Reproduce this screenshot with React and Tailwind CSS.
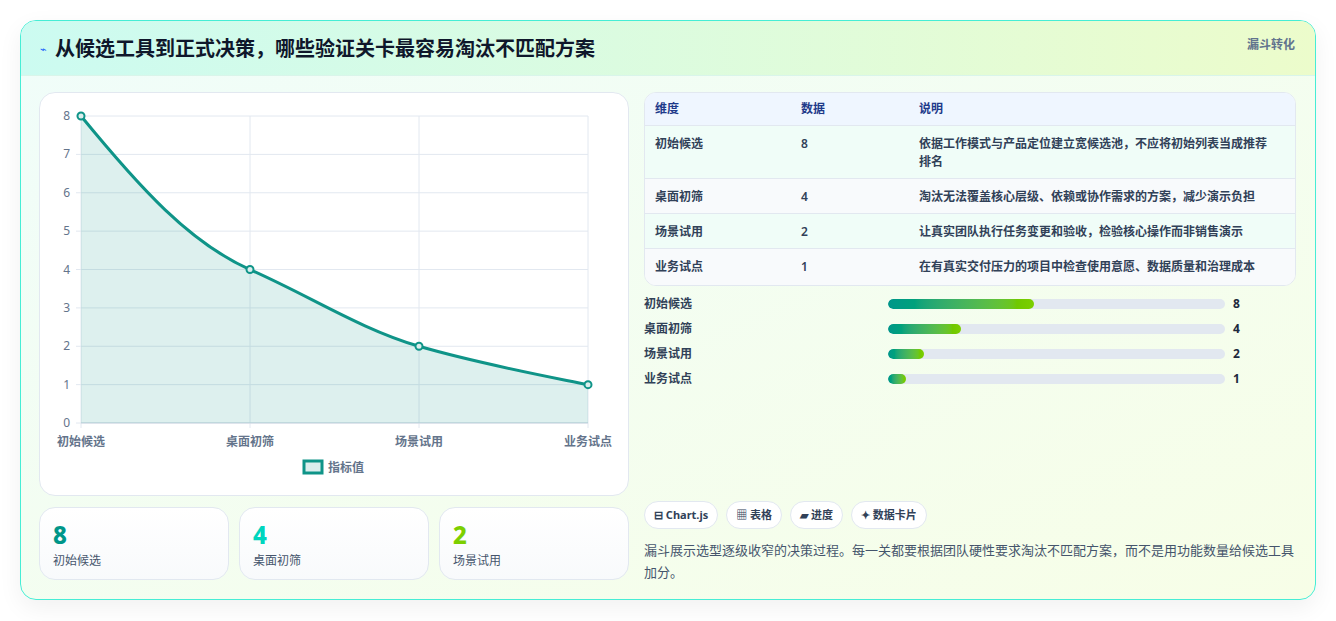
const font = { fontFamily: '"Noto Sans", "Noto Sans CJK SC", sans-serif' };

const rows = [
  { name: '初始候选', v: 8, desc: '依据工作模式与产品定位建立宽候选池，不应将初始列表当成推荐排名', h: 'h-[53px]' },
  { name: '桌面初筛', v: 4, desc: '淘汰无法覆盖核心层级、依赖或协作需求的方案，减少演示负担', h: 'h-[35px]' },
  { name: '场景试用', v: 2, desc: '让真实团队执行任务变更和验收，检验核心操作而非销售演示', h: 'h-[35px]' },
  { name: '业务试点', v: 1, desc: '在有真实交付压力的项目中检查使用意愿、数据质量和治理成本', h: 'h-[36px]' },
];

function Chart() {
  const ys = [0, 1, 2, 3, 4, 5, 6, 7, 8];
  const xs = [41, 210, 379, 548];
  const yOf = (v) => 330 - v * 38.375;
  const line = 'M41,23 C100,95 150,150 210,176.6 C270,203 320,236 379,253.3 C440,271 500,282 548,291.7';
  return (
    <svg width="589" height="404" className="block">
      {ys.map((v) => (
        <g key={v}>
          <line x1="36" x2="548" y1={yOf(v)} y2={yOf(v)} stroke="#e2e8f0" />
          <text x="30" y={yOf(v) + 4} textAnchor="end" fontSize="12" fill="#64748b">{v}</text>
        </g>
      ))}
      {xs.map((x) => (
        <line key={x} x1={x} x2={x} y1="23" y2="335" stroke="#e2e8f0" />
      ))}
      <line x1="41" x2="548" y1="330" y2="330" stroke="#cbd5e1" />
      <path d={line + ' L548,330 L41,330 Z'} fill="#0f9488" fillOpacity="0.14" />
      <path d={line} fill="none" stroke="#0f9488" strokeWidth="3" />
      {[8, 4, 2, 1].map((v, i) => (
        <circle key={i} cx={xs[i]} cy={yOf(v)} r="3.5" fill="#dbeeed" stroke="#0f9488" strokeWidth="2" />
      ))}
      {['初始候选', '桌面初筛', '场景试用', '业务试点'].map((t, i) => (
        <text key={t} x={xs[i]} y="353" textAnchor="middle" fontSize="12" fontWeight="600" fill="#64748b">{t}</text>
      ))}
      <rect x="264" y="368" width="18" height="12" fill="#dbeeed" stroke="#0f9488" strokeWidth="3" />
      <text x="288" y="379" fontSize="12" fontWeight="600" fill="#64748b">指标值</text>
    </svg>
  );
}

export default function App() {
  return (
    <div style={font} className="w-[1336px] h-[621px] bg-white pt-5 px-5">
      <div className="w-[1296px] h-[580px] rounded-2xl border border-teal-300 overflow-hidden bg-gradient-to-br from-[#f0fdfa] to-[#f7fee7] shadow-[0_8px_24px_rgba(0,0,0,0.06)] flex flex-col">
        <div className="h-[55px] shrink-0 flex items-start justify-between pl-[19px] pr-5 pt-[14px] bg-gradient-to-r from-[#ccfbf1] to-[#ecfccb] border-b border-[#d9f5ea]">
          <div className="flex items-center gap-2">
            <span className="text-blue-600 text-[11px]">⌁</span>
            <span className="text-[20px] font-bold text-slate-900 leading-7">从候选工具到正式决策，哪些验证关卡最容易淘汰不匹配方案</span>
          </div>
          <span className="text-xs font-bold text-slate-500 mt-[2px]">漏斗转化</span>
        </div>
        <div className="flex gap-[15px] pl-[18px] pt-4">
          <div className="w-[590px] flex flex-col gap-[11px]">
            <div className="h-[404px] rounded-2xl bg-white border border-slate-200">
              <Chart />
            </div>
            <div className="flex gap-[10px]">
              {[
                ['8', '初始候选', 'text-teal-600'],
                ['4', '桌面初筛', 'text-teal-400'],
                ['2', '场景试用', 'text-lime-500'],
              ].map(([n, l, c]) => (
                <div key={l} className="w-[190px] h-[73px] rounded-2xl border border-slate-200 bg-gradient-to-b from-white to-slate-50 px-[13px] pt-[13px]">
                  <div className={`text-[24px] font-extrabold leading-7 ${c}`}>{n}</div>
                  <div className="text-xs text-slate-600 mt-1">{l}</div>
                </div>
              ))}
            </div>
          </div>
          <div className="w-[652px] flex flex-col">
            <div className="rounded-xl border border-slate-200 overflow-hidden bg-white text-xs">
              <div className="h-[33px] flex items-center bg-blue-50 text-[#1e3a8a] font-bold border-b border-slate-200">
                <div className="w-[156px] pl-[10px]">维度</div>
                <div className="w-[118px]">数据</div>
                <div>说明</div>
              </div>
              {rows.map((r, i) => (
                <div key={r.name} className={`${r.h} flex items-start pt-[9px] text-slate-700 font-semibold ${i % 2 ? 'bg-slate-50' : 'bg-[#f0fdf8]'} ${i < 3 ? 'border-b border-slate-200' : ''}`}>
                  <div className="w-[156px] pl-[10px] leading-[18px]">{r.name}</div>
                  <div className="w-[118px] leading-[18px]">{r.v}</div>
                  <div className="w-[350px] leading-[18px]">{r.desc}</div>
                </div>
              ))}
            </div>
            <div className="mt-[9px] flex flex-col gap-[7px]">
              {rows.map((r) => (
                <div key={r.name} className="h-[18px] flex items-center text-xs font-semibold text-slate-700">
                  <div className="w-[244px]">{r.name}</div>
                  <div className="w-[337px] h-[10px] rounded-full bg-slate-200 overflow-hidden">
                    <div className="h-full rounded-full bg-gradient-to-r from-teal-600 to-lime-500" style={{ width: `${(r.v / 8) * 43.3}%` }} />
                  </div>
                  <div className="ml-2 font-bold text-slate-800">{r.v}</div>
                </div>
              ))}
            </div>
            <div className="mt-[113px] flex gap-[8px] text-[11px] font-bold text-slate-700">
              {['⊟ Chart.js', '▦ 表格', '▰ 进度', '✦ 数据卡片'].map((t) => (
                <span key={t} className="h-[28px] px-[9px] flex items-center rounded-full bg-white border border-slate-200">{t}</span>
              ))}
            </div>
            <p className="mt-[10px] text-[13px] leading-[22px] text-slate-600 w-[650px]">
              漏斗展示选型逐级收窄的决策过程。每一关都要根据团队硬性要求淘汰不匹配方案，而不是用功能数量给候选工具加分。
            </p>
          </div>
        </div>
      </div>
    </div>
  );
}
